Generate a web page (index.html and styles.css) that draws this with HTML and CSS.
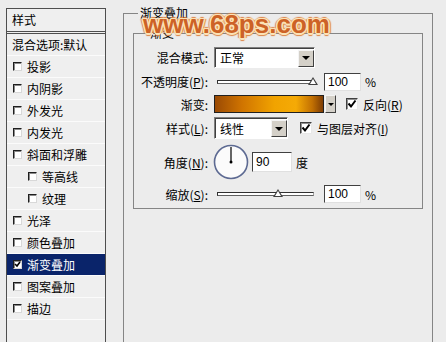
FILE: index.html
```html
<!DOCTYPE html>
<html lang="zh-CN">
<head>
    <meta charset="UTF-8">
    <title>图层样式 - 渐变叠加</title>
    <link rel="stylesheet" href="styles.css">
</head>
<body>

    <div class="window">
        <div class="style-list">
            <div class="list-head">样式</div>
            <div class="list-item">混合选项:默认</div>
            <div class="list-item"><span class="tick"></span>投影</div>
            <div class="list-item"><span class="tick"></span>内阴影</div>
            <div class="list-item"><span class="tick"></span>外发光</div>
            <div class="list-item"><span class="tick"></span>内发光</div>
            <div class="list-item"><span class="tick"></span>斜面和浮雕</div>
            <div class="list-item sub"><span class="tick"></span>等高线</div>
            <div class="list-item sub"><span class="tick"></span>纹理</div>
            <div class="list-item"><span class="tick"></span>光泽</div>
            <div class="list-item"><span class="tick"></span>颜色叠加</div>
            <div class="list-item selected">
                <span class="tick"><svg viewBox="0 0 7 7" width="7" height="7"><polyline points="1,3 3,5 6,1" fill="none" stroke="#000" stroke-width="1.6"/></svg></span>渐变叠加
            </div>
            <div class="list-item"><span class="tick"></span>图案叠加</div>
            <div class="list-item"><span class="tick"></span>描边</div>
        </div>

        <fieldset class="group outer">
            <legend>渐变叠加</legend>
            <fieldset class="group inner">
                <legend>渐变</legend>
                <div class="form">
                    <label class="lbl">混合模式:</label>
                    <div class="ctl">
                        <div class="select mode"><span class="value">正常</span><span class="drop"></span></div>
                    </div>

                    <label class="lbl">不透明度(<u>P</u>):</label>
                    <div class="ctl">
                        <div class="slider"><span class="thumb" style="left: 100%"></span></div>
                        <div class="num">100</div>
                        <span class="unit">%</span>
                    </div>

                    <label class="lbl">渐变:</label>
                    <div class="ctl">
                        <div class="grad"></div>
                        <span class="mini-drop"></span>
                        <span class="check"><svg viewBox="0 0 10 10" width="10" height="10"><polyline points="1.5,4.5 4,7.5 8.5,1.5" fill="none" stroke="#000" stroke-width="2"/></svg></span>
                        <span class="check-label">反向(<u>R</u>)</span>
                    </div>

                    <label class="lbl">样式(<u>L</u>):</label>
                    <div class="ctl">
                        <div class="select kind"><span class="value">线性</span><span class="drop"></span></div>
                        <span class="check wide-gap"><svg viewBox="0 0 10 10" width="10" height="10"><polyline points="1.5,4.5 4,7.5 8.5,1.5" fill="none" stroke="#000" stroke-width="2"/></svg></span>
                        <span class="check-label">与图层对齐(<u>I</u>)</span>
                    </div>

                    <label class="lbl">角度(<u>N</u>):</label>
                    <div class="ctl">
                        <svg class="dial" viewBox="0 0 36 36" width="36" height="36">
                            <circle cx="18" cy="18" r="16.5" fill="#fbfbfb" stroke="#5d6a92" stroke-width="1.6"/>
                            <line x1="18" y1="18" x2="18" y2="3" stroke="#000" stroke-width="1.2"/>
                            <circle cx="18" cy="18" r="1.5" fill="#000"/>
                        </svg>
                        <div class="num angle">90</div>
                        <span class="unit">度</span>
                    </div>

                    <label class="lbl">缩放(<u>S</u>):</label>
                    <div class="ctl">
                        <div class="slider"><span class="thumb" style="left: 63%"></span></div>
                        <div class="num">100</div>
                        <span class="unit">%</span>
                    </div>
                </div>
            </fieldset>
        </fieldset>

        <div class="watermark">www.68ps.com</div>
    </div>

</body>
</html>
```

FILE: styles.css
```css
body {
    margin: 0;
    width: 446px;
    height: 342px;
    overflow: hidden;
    background-color: #ececec;
    font-family: "Noto Sans CJK SC", sans-serif;
    font-size: 12px;
    color: #000;
}

.window {
    position: relative;
    display: flex;
    align-items: flex-start;
    padding-left: 6px;
}

/* lista de estilos a la izquierda */
.style-list {
    width: 98px;
    height: 333px;
    margin-top: 8px;
    border: 1px solid #4e4e4e;
    border-bottom: none;
    background-color: #efefef;
}

.list-head {
    height: 22px;
    line-height: 22px;
    padding-left: 5px;
    border-bottom: 3px double #4e4e4e;
}

.list-item {
    display: flex;
    align-items: center;
    height: 21px;
    padding-left: 5px;
    border-bottom: 1px solid #fbfbfb;
    white-space: nowrap;
}

.list-item.sub {
    padding-left: 20px;
}

.list-item.selected {
    background-color: #0a246a;
    color: #fff;
}

.tick {
    display: inline-flex;
    align-items: center;
    justify-content: center;
    width: 7px;
    height: 7px;
    margin: 0 5px 0 1px;
    border: 1px solid;
    border-color: #1e1e1e #d8d8d8 #d8d8d8 #1e1e1e;
    box-shadow: inset 1px 1px 0 #8a8a8a;
    background-color: #fff;
}

/* grupos */
.group {
    box-sizing: border-box;
    margin: 0;
    border: 1px solid #858585;
}

.group legend {
    padding: 0 2px;
    line-height: 14px;
}

.outer {
    width: 310px;
    height: 336px;
    margin: 6px 0 0 17px;
    padding: 6px 9px 0 9px;
    border-bottom: none;
}

.outer > legend {
    margin-left: 5px;
}

.inner {
    width: 290px;
    padding: 7px 0 5px 0;
}

.inner > legend {
    margin-left: 14px;
}

.form {
    display: grid;
    grid-template-columns: 74px 1fr;
    grid-template-rows: 21px 19px 18px 22px 38px 18px;
    column-gap: 6px;
    row-gap: 4px;
}

.lbl {
    align-self: center;
    text-align: right;
    white-space: nowrap;
}

.ctl {
    display: flex;
    align-items: center;
}

/* controles */
.select {
    box-sizing: border-box;
    display: flex;
    align-items: center;
    height: 21px;
    border: 1px solid;
    border-color: #808080 #fff #fff #808080;
    box-shadow: inset 1px 1px 0 #404040;
    background-color: #fff;
}

.select.mode {
    width: 101px;
}

.select.kind {
    width: 74px;
    height: 22px;
}

.select .value {
    padding-left: 5px;
}

.drop,
.mini-drop {
    box-sizing: border-box;
    display: flex;
    align-items: center;
    justify-content: center;
    background-color: #d4d0c8;
    border: 1px solid;
    border-color: #f4f4f4 #404040 #404040 #f4f4f4;
}

.drop {
    width: 16px;
    height: 17px;
    margin: 1px 0 0 auto;
}

.drop::after,
.mini-drop::after {
    content: "";
    border-left: 4px solid transparent;
    border-right: 4px solid transparent;
    border-top: 4px solid #000;
}

.mini-drop {
    width: 11px;
    height: 18px;
    margin-left: 1px;
}

.mini-drop::after {
    border-width: 3px 3px 0 3px;
}

.slider {
    position: relative;
    box-sizing: border-box;
    width: 97px;
    height: 4px;
    margin: 0 10px 0 3px;
    border: 1px solid;
    border-color: #303030 #a0a0a0 #606060 #303030;
    background-color: #fff;
}

.thumb {
    position: absolute;
    top: -4px;
    width: 0;
    height: 0;
    margin-left: -5px;
    border-left: 5px solid transparent;
    border-right: 5px solid transparent;
    border-bottom: 8px solid #404040;
}

.thumb::after {
    content: "";
    position: absolute;
    left: -3px;
    top: 2px;
    border-left: 3px solid transparent;
    border-right: 3px solid transparent;
    border-bottom: 5px solid #fff;
}

.num {
    box-sizing: border-box;
    width: 37px;
    height: 18px;
    padding-left: 3px;
    line-height: 16px;
    border: 1px solid;
    border-color: #404040 #e0e0e0 #e0e0e0 #404040;
    background-color: #fff;
    font-family: "Liberation Sans", Arial, sans-serif;
    font-size: 12px;
}

.num.angle {
    width: 40px;
    height: 20px;
    line-height: 18px;
    margin-left: 3px;
}

.unit {
    margin-left: 4px;
}

.grad {
    box-sizing: border-box;
    width: 110px;
    height: 18px;
    border: 1px solid #202020;
    background: linear-gradient(to right, #9a4a04 0%, #d07400 25%, #f1a300 55%, #f5aa06 75%, #c27002 90%, #7d3c04 100%);
}

.check {
    box-sizing: border-box;
    display: inline-flex;
    align-items: center;
    justify-content: center;
    width: 12px;
    height: 12px;
    margin-left: 10px;
    border: 1px solid;
    border-color: #404040 #e8e8e8 #e8e8e8 #404040;
    box-shadow: inset 1px 1px 0 #909090;
    background-color: #fff;
}

.check.wide-gap {
    margin-left: 12px;
}

.check-label {
    margin-left: 5px;
    white-space: nowrap;
}

.dial {
    display: block;
    margin-left: -1px;
}

/* marca de agua del sitio */
.watermark {
    position: absolute;
    left: 143px;
    top: 9px;
    font-family: "Liberation Sans", Arial, sans-serif;
    font-weight: bold;
    font-size: 26px;
    letter-spacing: 0;
    color: #cd6226;
    text-shadow:
        1.5px 0 0 #fbe2b6, -1.5px 0 0 #fbe2b6, 0 1.5px 0 #fbe2b6, 0 -1.5px 0 #fbe2b6,
        1px 1px 0 #fbe2b6, -1px -1px 0 #fbe2b6, 1px -1px 0 #fbe2b6, -1px 1px 0 #fbe2b6,
        2.5px 0 1px #dc8446, -2.5px 0 1px #dc8446, 0 2.5px 1px #dc8446, 0 -2.5px 1px #dc8446;
}
```
